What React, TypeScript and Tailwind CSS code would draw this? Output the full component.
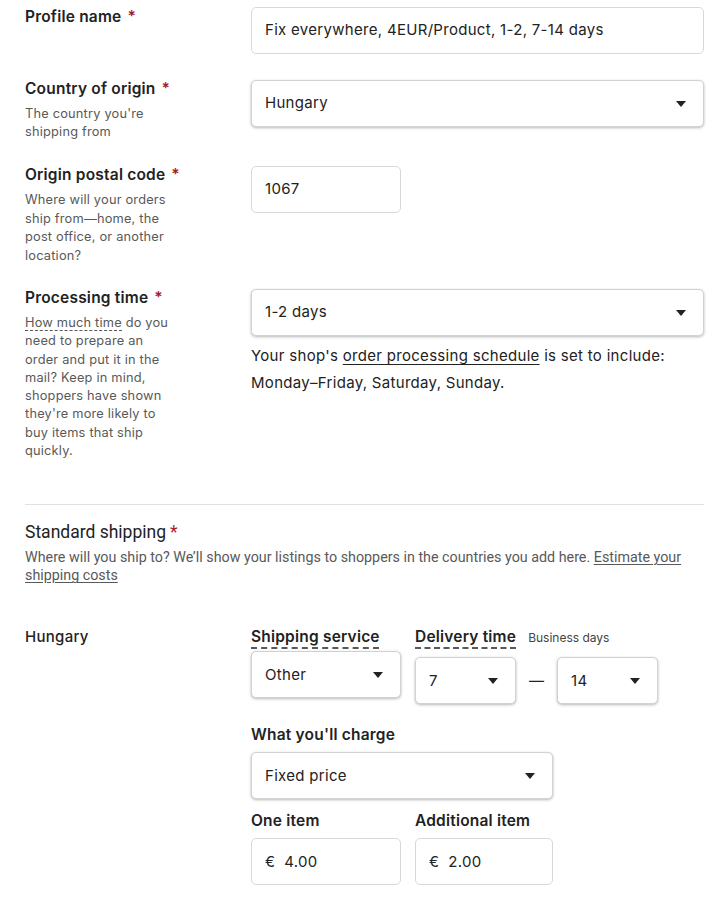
import React from "react";

const font = { fontFamily: "Inter, 'Noto Sans', sans-serif" };

const Req = () => <span className="ml-[6px] text-[#a61a2e]">*</span>;

const Caret = () => (
  <svg width="10" height="6" viewBox="0 0 10 6" className="shrink-0">
    <path d="M0 0h10L5 6z" fill="#222" />
  </svg>
);

type FieldProps = { value: string; className?: string };

const Input = ({ value, className = "" }: FieldProps) => (
  <div
    className={`flex h-[47px] items-center rounded-[5px] border border-[#d8d8d8] bg-white px-[13px] text-[15px] tracking-[0.3px] text-[#222] ${className}`}
  >
    {value}
  </div>
);

const Select = ({ value, className = "" }: FieldProps) => (
  <div
    className={`flex h-[47px] items-center justify-between rounded-[5px] border border-[#d2d2d2] bg-white pl-[13px] pr-[17px] text-[15px] tracking-[0.3px] text-[#222] shadow-[0_1px_3px_rgba(0,0,0,0.28)] ${className}`}
  >
    <span>{value}</span>
    <Caret />
  </div>
);

const Label = ({ children }: { children: React.ReactNode }) => (
  <div className="text-[15.5px] font-semibold leading-[20px] tracking-[0.2px] text-[#222]">{children}</div>
);

// description lines are broken where the reference breaks them
const Desc = ({ lines, lh = "leading-[18.5px]" }: { lines: React.ReactNode[]; lh?: string }) => (
  <div className={`mt-[6px] text-[12.8px] tracking-[0.2px] ${lh} text-[#595959]`}>
    {lines.map((l, i) => (
      <div key={i}>{l}</div>
    ))}
  </div>
);

export default function App() {
  return (
    <div className="min-h-[903px] w-[721px] bg-white pl-[25px] pr-[17px] pt-[7px]" style={font}>
      {/* profile name */}
      <div className="flex">
        <div className="w-[226px]">
          <Label>
            Profile name
            <Req />
          </Label>
        </div>
        <div className="flex-1">
          <Input value="Fix everywhere, 4EUR/Product, 1-2, 7-14 days" />
        </div>
      </div>

      {/* country */}
      <div className="mt-[25px] flex">
        <div className="w-[226px]">
          <Label>
            Country of origin
            <Req />
          </Label>
          <Desc lh="leading-[18px]" lines={["The country you're", "shipping from"]} />
        </div>
        <div className="flex-1 pt-[1px]">
          <Select value="Hungary" />
        </div>
      </div>

      {/* postal code */}
      <div className="mt-[24px] flex">
        <div className="w-[226px]">
          <Label>
            Origin postal code
            <Req />
          </Label>
          <Desc
            lines={["Where will your orders", "ship from—home, the", "post office, or another", "location?"]}
          />
        </div>
        <div className="flex-1 pt-[1px]">
          <Input value="1067" className="w-[150px]" />
        </div>
      </div>

      {/* processing time */}
      <div className="mt-[23px] flex">
        <div className="w-[226px]">
          <Label>
            Processing time
            <Req />
          </Label>
          <Desc
            lh="leading-[18.3px]"
            lines={[
              <>
                <span className="border-b border-dashed border-[#595959]">How much time</span> do you
              </>,
              "need to prepare an",
              "order and put it in the",
              "mail? Keep in mind,",
              "shoppers have shown",
              "they're more likely to",
              "buy items that ship",
              "quickly.",
            ]}
          />
        </div>
        <div className="flex-1 pt-[1px]">
          <Select value="1-2 days" />
          <p className="mt-[6px] text-[15px] leading-[27px] tracking-[0.3px] text-[#222]">
            Your shop's <span className="underline underline-offset-[3px]">order processing schedule</span> is set to
            include: Monday–Friday, Saturday, Sunday.
          </p>
        </div>
      </div>

      <div className="mt-[44px] h-px bg-[#e1e1e1]" />

      {/* standard shipping */}
      <div style={{ fontFamily: "Roboto, sans-serif" }}>
        <div className="mt-[15px] text-[17.5px] leading-[24px] text-[#222]">
          Standard shipping<span className="ml-[4px] text-[#a61a2e]">*</span>
        </div>
        <p className="mt-[4px] text-[14.3px] leading-[18px] text-[#595959]">
          Where will you ship to? We’ll show your listings to shoppers in the countries you add here.{" "}
          <span className="underline underline-offset-2">Estimate your shipping costs</span>
        </p>
      </div>

      <div className="mt-[43px] flex">
        <div className="w-[226px] text-[15px] font-medium leading-[20px] tracking-[0.3px] text-[#222]">Hungary</div>
        <div className="flex-1">
          <div className="flex">
            <div className="w-[164px]">
              <div className="w-fit text-[15.5px] font-semibold leading-[20px] tracking-[0.2px] text-[#222] underline decoration-dashed decoration-[#222] underline-offset-[5px]">
                Shipping service
              </div>
              <Select value="Other" className="mt-[4px] w-[150px]" />
            </div>
            <div>
              <div className="flex h-[20px] items-baseline">
                <span className="text-[15.5px] font-semibold leading-[20px] tracking-[0.2px] text-[#222] underline decoration-dashed decoration-[#222] underline-offset-[5px]">
                  Delivery time
                </span>
                <span className="ml-[12px] text-[12px] leading-[20px] text-[#444]">Business days</span>
              </div>
              <div className="mt-[10px] flex items-center">
                <Select value="7" className="w-[101px]" />
                <span className="mx-[13px] text-[15px] text-[#222]">—</span>
                <Select value="14" className="w-[101px]" />
              </div>
            </div>
          </div>

          <div className="mt-[21px] text-[15.5px] font-semibold leading-[20px] tracking-[0.2px] text-[#222]">
            What you'll charge
          </div>
          <Select value="Fixed price" className="mt-[7px] w-[302px]" />

          <div className="mt-[12px] flex">
            <div className="w-[164px]">
              <div className="text-[15.5px] font-semibold leading-[20px] tracking-[0.2px] text-[#222]">One item</div>
              <Input value="€  4.00" className="mt-[7px] w-[150px] whitespace-pre" />
            </div>
            <div>
              <div className="text-[15.5px] font-semibold leading-[20px] tracking-[0.2px] text-[#222]">
                Additional item
              </div>
              <Input value="€  2.00" className="mt-[7px] w-[138px] whitespace-pre" />
            </div>
          </div>
        </div>
      </div>
    </div>
  );
}
